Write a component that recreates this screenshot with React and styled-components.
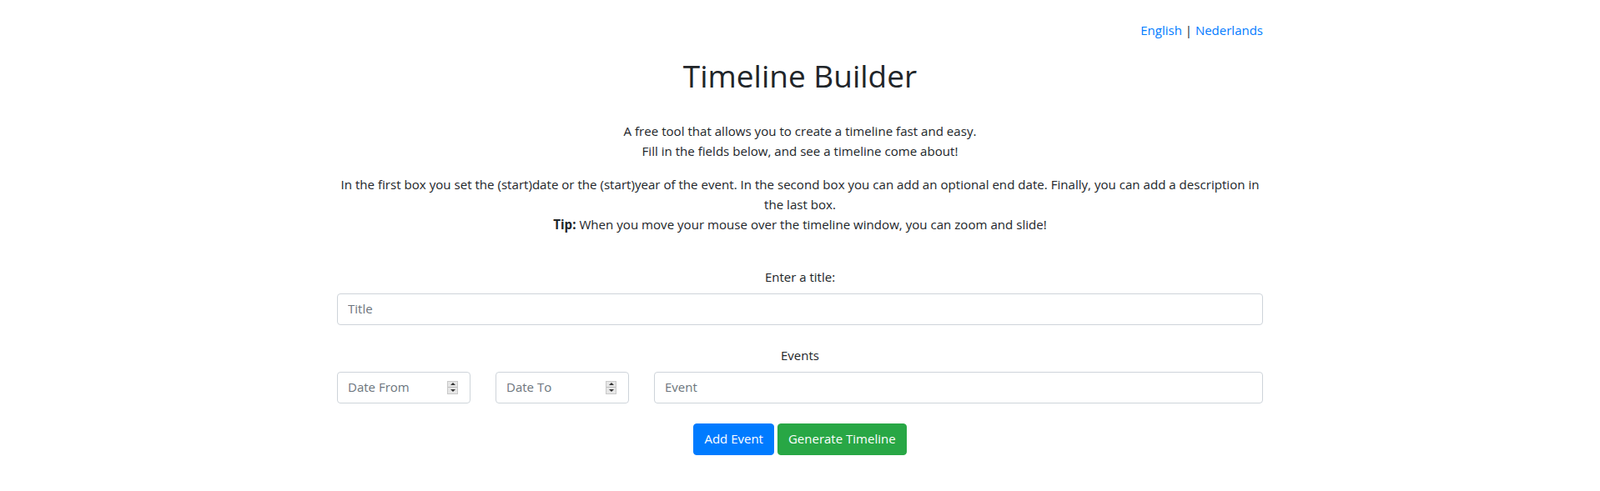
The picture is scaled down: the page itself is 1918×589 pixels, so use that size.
import React from "react";
import styled, { createGlobalStyle } from "styled-components";

const Global = createGlobalStyle`
  html, body { margin: 0; padding: 0; background: #fff; }
  body {
    font-family: "Open Sans", "Noto Sans", Arial, sans-serif;
    font-size: 16px;
    line-height: 1.5;
    color: #212529;
  }
  * { box-sizing: border-box; }
`;

const Container = styled.div`
  width: 1140px;
  margin: 0 auto;
  padding: 25px 15px 40px;
`;

const LangBar = styled.div`
  text-align: right;
  font-size: 15px;
`;

const Link = styled.a`
  color: #007bff;
  text-decoration: none;
`;

const Heading = styled.h1`
  margin: 19px 0 30px;
  font-size: 37px;
  font-weight: 400;
  line-height: 48px;
  text-align: center;
`;

const Para = styled.p`
  margin: 0 0 16px;
  text-align: center;
  font-size: 15.1px;
  line-height: 24px;
`;

const Label = styled.div`
  margin: ${(p) => p.$top}px 0 8px;
  text-align: center;
  font-size: 15px;
  line-height: 24px;
`;

const Row = styled.div`
  display: grid;
  grid-template-columns: 160px 160px 1fr;
  column-gap: 30px;
`;

const Field = styled.div`
  display: flex;
  align-items: center;
  height: 38px;
  padding: 0 14px 0 12px;
  border: 1px solid #ced4da;
  border-radius: 4px;
  background: #fff;
`;

const Input = styled.input`
  flex: 1;
  min-width: 0;
  border: none;
  outline: none;
  padding: 0;
  background: transparent;
  font: inherit;
  font-size: 15px;
  color: #495057;
  &::placeholder { color: #6c757d; opacity: 1; }
`;

const Spinner = styled.div`
  width: 13px;
  height: 16px;
  display: flex;
  flex-direction: column;
  background: #e6e6e6;
  border: 1px solid #c9c9c9;
`;

const SpinHalf = styled.div`
  flex: 1;
  display: flex;
  align-items: center;
  justify-content: center;
  & + & { border-top: 1px solid #bdbdbd; }
`;

const Arrow = styled.span`
  width: 0;
  height: 0;
  border-left: 3px solid transparent;
  border-right: 3px solid transparent;
  ${(p) =>
    p.$up
      ? "border-bottom: 3px solid #333;"
      : "border-top: 3px solid #333;"}
`;

const Buttons = styled.div`
  display: flex;
  justify-content: center;
  gap: 4px;
  margin-top: 24px;
`;

const Button = styled.button`
  height: 38px;
  padding: 0 12px;
  border: 1px solid ${(p) => p.$bg};
  border-radius: 4px;
  background: ${(p) => p.$bg};
  color: #fff;
  font: inherit;
  font-size: 15px;
  cursor: pointer;
`;

function NumberField({ placeholder }) {
  return (
    <Field>
      <Input type="text" placeholder={placeholder} />
      <Spinner>
        <SpinHalf><Arrow $up /></SpinHalf>
        <SpinHalf><Arrow /></SpinHalf>
      </Spinner>
    </Field>
  );
}

export default function App() {
  return (
    <>
      <Global />
      <Container>
        <LangBar>
          <Link href="#">English</Link> | <Link href="#">Nederlands</Link>
        </LangBar>
        <Heading>Timeline Builder</Heading>
        <Para>
          A free tool that allows you to create a timeline fast and easy.
          <br />
          Fill in the fields below, and see a timeline come about!
        </Para>
        <Para>
          In the first box you set the (start)date or the (start)year of the
          event. In the second box you can add an optional end date. Finally,
          you can add a description in the last box.
          <br />
          <b>Tip:</b> When you move your mouse over the timeline window, you
          can zoom and slide!
        </Para>
        <Label $top={39}>Enter a title:</Label>
        <Field>
          <Input type="text" placeholder="Title" />
        </Field>
        <Label $top={24}>Events</Label>
        <Row>
          <NumberField placeholder="Date From" />
          <NumberField placeholder="Date To" />
          <Field>
            <Input type="text" placeholder="Event" />
          </Field>
        </Row>
        <Buttons>
          <Button $bg="#007bff">Add Event</Button>
          <Button $bg="#28a745">Generate Timeline</Button>
        </Buttons>
      </Container>
    </>
  );
}
